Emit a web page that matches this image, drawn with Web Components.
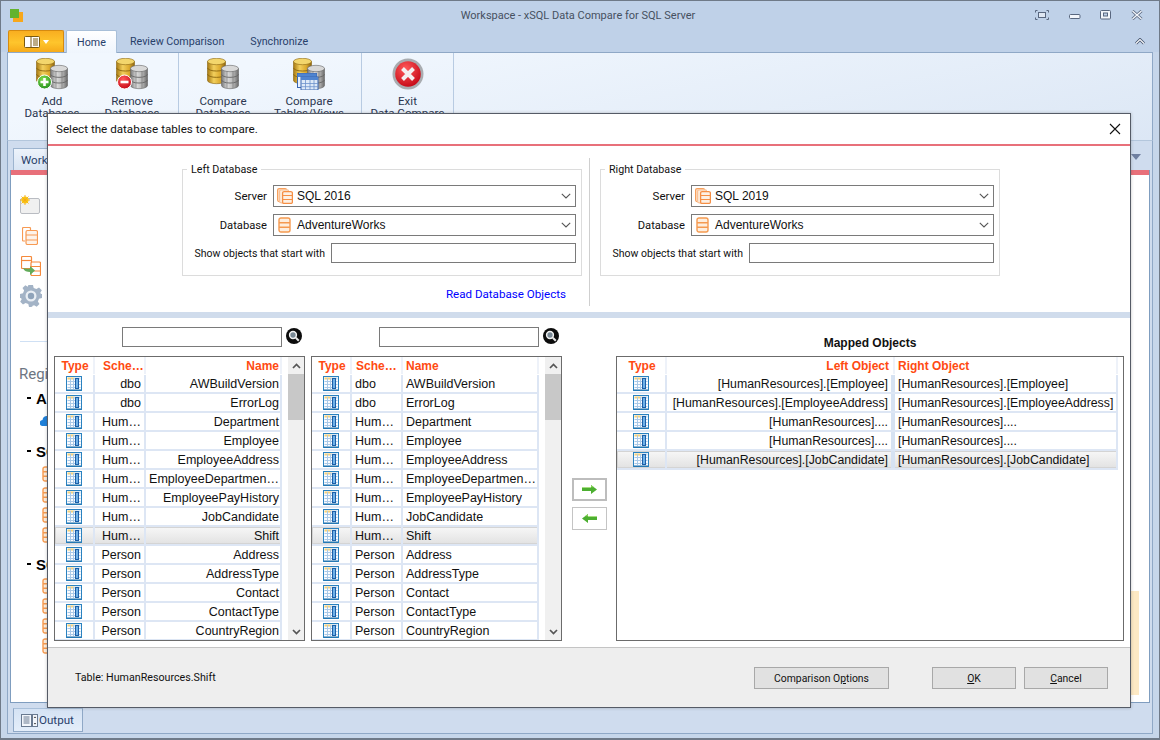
<!DOCTYPE html>
<html lang="en"><head><meta charset="utf-8"><title>xSQL Data Compare</title>
<style>
html,body{margin:0;padding:0;background:#cedcee;overflow:hidden}
body{font:11px Roboto,"Liberation Sans",sans-serif;color:#111}
</style></head><body>
<app-window></app-window>
<script>
function def(name, css, html, init){
  customElements.define(name, class extends HTMLElement{
    connectedCallback(){
      if(this.shadowRoot) return;
      const r=this.attachShadow({mode:'open'});
      const h=typeof html==='function'?html(this):html;
      r.innerHTML='<style>'+css+'</style>'+h;
      if(init) init(this,r);
    }
  });
}
const GR=`<defs>
<linearGradient id="gold" x1="0" x2="1" y1="0" y2="0"><stop offset="0" stop-color="#a87a12"/><stop offset=".35" stop-color="#f2cf5c"/><stop offset=".7" stop-color="#dcaa2e"/><stop offset="1" stop-color="#8c6410"/></linearGradient>
<linearGradient id="gray" x1="0" x2="1" y1="0" y2="0"><stop offset="0" stop-color="#777"/><stop offset=".35" stop-color="#dcdcdc"/><stop offset=".7" stop-color="#b5b5b5"/><stop offset="1" stop-color="#6a6a6a"/></linearGradient>
<radialGradient id="grn" cx=".4" cy=".3" r=".8"><stop offset="0" stop-color="#7fdc4a"/><stop offset="1" stop-color="#1d8a1d"/></radialGradient>
<radialGradient id="red" cx=".4" cy=".3" r=".8"><stop offset="0" stop-color="#ff5a5a"/><stop offset="1" stop-color="#c00010"/></radialGradient>
</defs>`;
function cyl(x,y,w,h,f,line,top){
  const rx=w/2, ry=3.2;
  let s=`<path d="M${x} ${y}v${h}a${rx} ${ry} 0 0 0 ${w} 0v-${h}z" fill="url(#${f})" stroke="${line}" stroke-width=".6"/>`;
  for(let i=1;i<3;i++){const yy=y+h*i/3;s+=`<path d="M${x} ${yy}a${rx} ${ry} 0 0 0 ${w} 0" fill="none" stroke="${line}" stroke-width=".9"/>`;}
  s+=`<ellipse cx="${x+rx}" cy="${y}" rx="${rx}" ry="${ry}" fill="${top}" stroke="${line}" stroke-width=".6"/>`;
  return s;
}
const GOLD=cyl(.5,3.5,18,19,'gold','#8a6510','#f3d66c');
const GRAY=cyl(14.5,10.5,17,17,'gray','#666','#d8d8d8')+`<path d="M20 13v17M26 13v17" stroke="#777" stroke-width=".7"/>`;
function ribbonIcon(kind){
  let extra='';
  if(kind==='add') extra=`<circle cx="8.5" cy="24" r="7" fill="url(#grn)" stroke="#fff" stroke-width="1"/><path d="M8.5 20v8M4.5 24h8" stroke="#fff" stroke-width="2.6"/>`;
  if(kind==='remove') extra=`<circle cx="8.5" cy="24" r="7" fill="url(#red)" stroke="#fff" stroke-width="1"/><path d="M4.5 24h8" stroke="#fff" stroke-width="2.6"/>`;
  if(kind==='tables') extra=`<rect x="4.5" y="15.5" width="19" height="14" fill="#eaf2fc" stroke="#3a66b0"/><rect x="4.5" y="15.5" width="19" height="3.5" fill="#4f84d0"/><rect x="8" y="19" width="17" height="13" fill="#dde9f8" stroke="#3a66b0"/><rect x="8" y="19" width="17" height="3" fill="#4f84d0"/><path d="M8 25.5h17M8 28.7h17M12.5 22v10M17 22v10M21 22v10" stroke="#6d92cc" stroke-width=".8"/>`;
  if(kind==='exit') return `<svg width="32" height="32" viewBox="0 0 32 32">${GR}<circle cx="16" cy="16" r="15.5" fill="#a9acb0"/><circle cx="16" cy="16" r="12.8" fill="url(#red)"/><path d="M10.5 10.5l11 11M21.5 10.5l-11 11" stroke="#f4f0f0" stroke-width="4"/></svg>`;
  return `<svg width="32" height="32" viewBox="0 0 32 32">${GR}${GOLD}${GRAY}${extra}</svg>`;
}
const SERVER=`<svg width="16" height="16" viewBox="0 0 16 16" fill="none" stroke="#f7a05c" stroke-width="1.2"><rect x=".6" y=".6" width="9" height="13" rx="1.5" fill="#fde3cd"/><rect x="2.6" y="1.8" width="9" height="13" rx="1.5" fill="#fdeede" stroke="#f9c196"/><rect x="5.6" y="3.6" width="9.8" height="11.8" rx="1.5" fill="#fdf0e4" stroke="#f58f45" stroke-width="1.3"/><path d="M5.6 7.500h9.800M5.600 11.500h9.800" stroke="#f58f45"/></svg>`;
const DBI=`<svg width="13" height="16" viewBox="0 0 13 16" fill="none" stroke="#f59a50" stroke-width="1.400" style="display:block"><rect x="1" y="1" width="11" height="14" rx="2" fill="#fdeede"/><path d="M1 5.700h11M1 10.300h11"/></svg>`;
const TBL=`<svg width="16" height="15" viewBox="0 0 16 15" style="display:block"><rect x=".5" y=".5" width="15" height="14" fill="#fafcff" stroke="#2a82c0"/><rect x="1.500" y="1.500" width="7" height="2" fill="#f6d27a"/><rect x="8.500" y="1.500" width="6" height="2" fill="#bcd6ee"/><path d="M1.500 5.500h13M1.500 8.500h13M1.500 11.500h13M4.500 2v11M7.500 2v11" stroke="#a9c9e8" stroke-width="1"/><rect x="9.500" y="2.500" width="3" height="10" fill="#6fb0e6" stroke="#1c5fa8"/><path d="M1 14h14" stroke="#1f6ea8" stroke-width="1"/></svg>`;

def('tbl-icon',':host{display:block;width:16px;height:15px}',TBL);
def('ribbon-btn',`:host{display:flex;flex-direction:column;align-items:center;box-sizing:border-box;padding-top:5px;text-align:center;color:#2b3650;line-height:12px;font-size:11.6px}
 .i{height:32px;margin-bottom:5px}`,h=>`<div class="i">${ribbonIcon(h.getAttribute('icon'))}</div><slot></slot>`);
def('ribbon-group',`:host{display:flex;height:100%;border-right:1px solid #b8cbe2;box-sizing:border-box}`,`<slot></slot>`);
def('title-bar',`:host{display:flex;align-items:center;height:30px;position:relative;padding-left:10px;box-sizing:border-box;color:#46505f}
 .logo{width:13px;height:13px;margin-top:1px;flex:none}
 .t{flex:1;text-align:center;padding-left:98px}
 .w{display:flex;gap:15px;padding-right:17px;align-items:center}
 svg{display:block}`,
 `<svg class="logo" viewBox="0 0 13 13"><rect x="3" y="3" width="10" height="10" fill="#f7a71a"/><rect width="9" height="9" fill="#63b32e"/></svg>
 <div class="t">Workspace - xSQL Data Compare for SQL Server</div>
 <div class="w">
 <svg width="14" height="10" viewBox="0 0 14 10" fill="none" stroke="#59677f"><path d="M.5 2.500v-2h2M11.500.5h2v2M.5 7.500v2h2M11.500 9.500h2v-2"/><rect x="3.500" y="2.500" width="7" height="5" fill="#dfe7f2"/></svg>
 <svg style="margin-left:5px;margin-top:2px" width="12" height="5" viewBox="0 0 12 5" fill="#f3f6fb" stroke="#59677f"><rect x=".5" y=".5" width="10.500" height="4" rx="1"/></svg>
 <svg style="margin-left:4px" width="11" height="10" viewBox="0 0 11 10" fill="#f3f6fb" stroke="#59677f"><rect x=".5" y=".5" width="10" height="8.500" rx="1"/><rect x="3.500" y="3" width="4" height="3" fill="#bfd1e8"/></svg>
 <svg style="margin-left:5px" width="12" height="10" viewBox="0 0 12 10"><path d="M1.500 1l9 8M10.500 1l-9 8" stroke="#59677f" stroke-width="3"/><path d="M1.500 1l9 8M10.500 1l-9 8" stroke="#f3f6fb" stroke-width="1.400"/></svg>
 </div>`);
def('ribbon-tabs',`:host{display:flex;height:22px;padding-left:8px;align-items:stretch;position:relative;color:#28406a;font-size:10.7px}
 .file{width:56px;box-sizing:border-box;border:1px solid #d58a10;border-bottom:none;border-radius:2px 2px 0 0;background:linear-gradient(#f9ae20,#fec52c 55%,#f6aa1a);display:flex;align-items:center;justify-content:center;gap:3px}
 .home{margin-left:2px;width:51px;box-sizing:border-box;border:1px solid #a8bfd8;border-bottom:none;border-radius:2px 2px 0 0;background:linear-gradient(#fff,#eff5fd);display:flex;align-items:center;justify-content:center;position:relative;z-index:1;height:23px}
 .tab{display:flex;align-items:center;margin-left:13px}.tab.s{margin-left:26px}
 .col{position:absolute;right:15px;top:8px}`,
 `<div class="file"><svg width="16" height="12" viewBox="0 0 16 12" fill="#fff" stroke="#7a5a10"><rect x=".5" y=".5" width="15" height="11" rx="1"/><path d="M7 .5v11M9 3h5M9 5h5M9 7h5M9 9h5" fill="none"/></svg><svg width="6" height="4" viewBox="0 0 6 4"><path d="M0 0h6L3 4z" fill="#fff"/></svg></div>
 <div class="home">Home</div><div class="tab">Review Comparison</div><div class="tab s">Synchronize</div>
 <svg class="col" width="10" height="7" viewBox="0 0 10 7" fill="none"><path d="M1 5.500l4-4 4 4" stroke="#46556e" stroke-width="2.800"/><path d="M1 5.500l4-4 4 4" stroke="#fff" stroke-width="1.100"/></svg>`);
def('ribbon-bar',`:host{display:flex;height:89px;margin:0 7px;box-sizing:border-box;border:1px solid #8fa8c6;border-bottom-color:#b3c6dc;background:linear-gradient(168deg,#f1f7fe 20%,#dce7f5 100%);flex:none}`,`<slot></slot>`);
def('doc-tabs',`:host{display:flex;height:29px;padding:7px 8px 0 3px;box-sizing:border-box;justify-content:space-between;color:#28406a;flex:none;font-size:11.6px}
 .tab{width:70px;height:22px;box-sizing:border-box;border:1px solid #9db4cf;border-bottom:none;background:linear-gradient(#edf3fb,#d8e4f3);padding:4px 0 0 7px}
 svg{margin:6px 1px 0 0}`,`<div class="tab">Workspace</div><svg width="10" height="6" viewBox="0 0 10 6"><path d="M0 0h10L5 6z" fill="#6f7fa0"/></svg>`);
def('side-row',`:host{display:flex;align-items:center;height:20px;padding-left:22px}`,`<slot></slot>`);
def('side-head',`:host{display:flex;align-items:center;height:20px;padding-left:7px;gap:5px;font:bold 15px "Liberation Sans",sans-serif;color:#000}
 i{display:block;width:4px;height:1.500px;background:#000}`,`<i></i><slot></slot>`);
def('side-bar',`:host{display:block;flex:1;padding:20px 0 0 9px;min-width:0}
 .ic{display:flex;flex-direction:column;align-items:flex-start}
 .line{height:1px;background:#cfe0f4;width:40px;margin-top:34px}
 .reg{font-size:15px;color:#6d7682;margin-top:21px;height:22px;line-height:22px;margin-left:-1px}
 svg{display:block}`,
 `<div class="ic">
 <svg width="21" height="19" viewBox="0 0 21 19"><rect x=".5" y="3.500" width="19" height="15" rx="1.500" fill="#f0f0f0" stroke="#b9bcc2"/><circle cx="5" cy="5" r="3.500" fill="#fbd116"/><path d="M5 0v10M0 5h10M1.500 1.500l7 7M8.500 1.500l-7 7" stroke="#f5a816" stroke-width=".9"/></svg>
 <svg style="margin:13px 0 0 2px" width="16" height="18" viewBox="0 0 16 18" fill="none" stroke="#f79a53" stroke-width="1.200"><path d="M3 14H1.500a1 1 0 0 1-1-1V1.500a1 1 0 0 1 1-1h6a1 1 0 0 1 1 1V3"/><rect x="4" y="3.500" width="11.500" height="14" rx="1.500" fill="#fdf3ea"/><path d="M4 8h11.500M4 13h11.500"/></svg>
 <svg style="margin:11px 0 0 1px" width="20" height="20" viewBox="0 0 20 20" fill="none" stroke="#f58a3c" stroke-width="1.200"><rect x=".5" y=".5" width="10" height="12" rx="1"/><path d="M.5 4.500h10"/><rect x="10" y="6" width="9.500" height="13.500" rx="1" fill="#fff"/><path d="M10 10.500h9.500M10 15h9.500"/><path d="M2 12c1 3 4 4 7 4v3l5-4.500L9 10v2.500c-3 .5-5 0-7-.5z" fill="#62ab5a" stroke="none"/></svg>
 <svg style="margin:9px 0 0" width="22" height="22" viewBox="0 0 22 22"><path d="M9 0h4l.7 3 2.700 1.100 2.600-1.600 2.800 2.800-1.600 2.600L21.300 9 22 9v4l-3 .7-1.100 2.700 1.600 2.600-2.800 2.800-2.600-1.600-2.700 1.100L13 22H9l-.7-3-2.700-1.100-2.600 1.600-2.800-2.800 1.600-2.600L.7 13H0V9l3-.7 1.100-2.700-1.600-2.600 2.800-2.800 2.600 1.600L8.300 0z" fill="#a3b3c6"/><circle cx="11" cy="11" r="5.500" fill="#e9eef4"/><circle cx="11" cy="11" r="3.200" fill="#8fa3ba"/></svg>
 </div>
 <div class="line"></div>
 <div class="reg">Regi</div>
 <side-head style="margin-top:3px">A</side-head>
 <side-row style="margin-top:2px;padding-left:20px"><svg width="16" height="11" viewBox="0 0 16 11"><path d="M3 11a3 3 0 0 1-.5-6A4.500 4.500 0 0 1 11 3.500a3.800 3.800 0 0 1 1 7.500z" fill="#1e7fd8"/></svg></side-row>
 <side-head style="margin-top:11px">SC</side-head>
 <side-row style="margin-top:3px">${DBI}</side-row><side-row style="margin-top:1px">${DBI}</side-row><side-row>${DBI}</side-row><side-row>${DBI}</side-row>
 <side-head style="margin-top:9px">SC</side-head>
 <side-row style="margin-top:2px">${DBI}</side-row><side-row>${DBI}</side-row><side-row>${DBI}</side-row><side-row>${DBI}</side-row>`);
def('work-panel',`:host{display:flex;flex:1;min-height:0;margin:0 0 5px;background:#fff;border:1px solid #7f9dbf;border-top:none;box-sizing:border-box;flex-direction:column}
 .red{height:5px;background:#e8707a;flex:none}
 .b{flex:1;display:flex;min-height:0}
 .y{width:8px;height:104px;margin:416px 10px 0 0;background:#fde9c4;flex:none}`,
 `<div class="red"></div><div class="b"><side-bar></side-bar><div class="y"></div></div>`);
def('output-bar',`:host{display:flex;height:24px;padding:0 0 0 3px;color:#28406a;margin-bottom:1px;flex:none;font-size:11.6px}
 .tab{display:flex;align-items:center;gap:1px;width:70px;box-sizing:border-box;padding-left:7px;border:1px solid #8fa8c6;border-top-color:#a9c0da;background:linear-gradient(#d5e3f4,#e4eefa)}`,
 `<div class="tab"><svg width="17" height="13" viewBox="0 0 17 13"><rect x=".5" y=".5" width="10" height="12" fill="#f3f6fb" stroke="#6a7a90"/><path d="M2.500 3h6M2.500 5h6M2.500 7h6M2.500 9h6" stroke="#6a7a90"/><rect x="11.500" y=".5" width="5" height="12" fill="#f3f6fb" stroke="#6a7a90"/><path d="M12.800 4l1.200-1.600L15.200 4zM12.800 9l1.200 1.600L15.200 9z" fill="#333"/></svg>Output</div>`);

/* dialog parts */
def('combo-box',`:host{display:flex;align-items:center;width:303px;height:22px;box-sizing:border-box;border:1px solid #7a7a7a;background:#fff;padding-left:2px;font:12px "Liberation Sans",sans-serif;color:#111}
 .ic{width:17px;display:flex;justify-content:center;margin-right:4px;flex:none}
 .t{flex:1}svg{display:block}.c{margin-right:4px}`,
 h=>`<div class="ic">${h.getAttribute('icon')==='server'?SERVER:DBI}</div><div class="t"><slot></slot></div><svg class="c" width="10" height="6" viewBox="0 0 10 6" fill="none"><path d="M.8.8L5 5l4.200-4.200" stroke="#555" stroke-width="1.100"/></svg>`);
def('form-row',`:host{display:flex;justify-content:flex-end;align-items:center;gap:6px;color:#111;white-space:nowrap;font-size:11.2px}`,`<slot></slot>`);
def('text-box',`:host{display:block;box-sizing:border-box;border:1px solid #7a7a7a;background:#fff;height:20px}`,``);
def('group-box',`:host{display:block;width:400px;height:107px;box-sizing:border-box;border:1px solid #dcdcdc;position:relative;padding:15px 5px 0 0}
 .l{position:absolute;left:4px;top:-7px;background:#fff;padding:0 4px;line-height:14px;color:#111;font-size:10.7px}
 .r{display:flex;flex-direction:column;gap:7px}`,
 h=>`<div class="l">${h.getAttribute('label')}</div><div class="r"><slot></slot></div>`);
const rowsFor=[['AWBuildVersion','dbo'],['ErrorLog','dbo'],['Department','Hum…'],['Employee','Hum…'],['EmployeeAddress','Hum…'],['EmployeeDepartmen…','Hum…'],['EmployeePayHistory','Hum…'],['JobCandidate','Hum…'],['Shift','Hum…',1],['Address','Person'],['AddressType','Person'],['Contact','Person'],['ContactType','Person'],['CountryRegion','Person']];
const GRIDCSS=`:host{display:flex;box-sizing:border-box;border:1px solid #6b6b6b;background:#fff;height:285px;font:12.5px "Liberation Sans",sans-serif;color:#111;overflow:hidden}
 .rows{flex:1;min-width:0;display:flex;flex-direction:column}
 .row,.head{display:grid;grid-template-columns:var(--cols);height:19px;box-sizing:border-box;flex:none}
 .head{height:18px;padding-bottom:1px;font:bold 12px "Liberation Sans",sans-serif;color:#ff4a12;align-items:center}
 .row{border-bottom:2px solid #dde6f4}
 .row>div{display:flex;align-items:center;border-right:2px solid #dde6f4;padding:0 1px 0 3px;white-space:nowrap;overflow:hidden;min-width:0}
 .head>div{display:flex;align-items:center;border-right:2px solid #eef2f9;padding:0 1px 0 3px;white-space:nowrap;height:100%;box-sizing:border-box}
 .c{justify-content:center}.e{justify-content:flex-end}.s{justify-content:flex-start}
 .row>.c{padding:0}.head>.c{padding:0 0 0 2px}
 .row.sel{background:linear-gradient(#f7f7f7,#e2e2e2);box-shadow:inset 0 0 0 1px #d4d4d4}
 .sb{width:22px;flex:none;padding-left:6px;box-sizing:border-box;display:flex;flex-direction:column}
 .tr{flex:1;background:#f0f0f0;display:flex;flex-direction:column;align-items:center}
 .ar{height:17px;display:flex;align-items:center;justify-content:center;flex:none}
 .th{width:100%;height:46px;background:#c8c8c8;flex:none}
 .sp{flex:1}`;
const CHEV=d=>`<svg width="9" height="6" viewBox="0 0 9 6" fill="none"><path d="${d?'M1 1l3.500 3.500L8 1':'M1 5l3.500-3.500L8 5'}" stroke="#555" stroke-width="1.700"/></svg>`;
def('object-grid',GRIDCSS+`:host{--cols:40px 51px 136px}`,h=>{
 const right=h.getAttribute('align')==='right', a=right?'e':'s';
 return `<div class="rows"><div class="head"><div class="c">Type</div><div class="s" style="padding-left:${right?8:4}px">Sche…</div><div class="${a}">Name</div></div>`+
 rowsFor.map(r=>`<div class="row${r[2]?' sel':''}"><div class="c"><tbl-icon></tbl-icon></div><div class="${a}" style="${right?'padding-right:3px':''}">${r[1]}</div><div class="${a}">${r[0]}</div></div>`).join('')+
 `</div><div class="sb"><div class="tr"><div class="ar">${CHEV(0)}</div><div class="th"></div><div class="sp"></div><div class="ar">${CHEV(1)}</div></div></div>`;
});
def('mapped-grid',GRIDCSS+`:host{--cols:50px 228px 223px;padding-right:5px;font-size:12.3px}
 .row>div.g{border-right:4px solid #d6e2f2}
 .row{width:501px}`,()=>{
 const d=[['[HumanResources].[Employee]','[HumanResources].[Employee]'],['[HumanResources].[EmployeeAddress]','[HumanResources].[EmployeeAddress]'],['[HumanResources]....','[HumanResources]....'],['[HumanResources]....','[HumanResources]....'],['[HumanResources].[JobCandidate]','[HumanResources].[JobCandidate]',1]];
 return `<div class="rows"><div class="head"><div class="c">Type</div><div class="e" style="padding-right:4px">Left Object</div><div class="s" style="padding-left:3px">Right Object</div></div>`+
 d.map(r=>`<div class="row${r[2]?' sel':''}"><div class="c"><tbl-icon></tbl-icon></div><div class="e g" style="padding-right:3px">${r[0]}</div><div class="s" style="padding-left:3px">${r[1]}</div></div>`).join('')+`</div>`;
});
def('search-row',`:host{display:flex;justify-content:flex-end;align-items:center;gap:4px;padding-right:3px;height:20px}
 text-box{width:160px}svg{display:block;margin-top:-3px}`,
 `<text-box></text-box><svg width="16" height="16" viewBox="0 0 16 16"><circle cx="8" cy="8" r="8" fill="#0c0c0c"/><circle cx="7" cy="7" r="3.400" fill="#7a8a96" stroke="#f2f2f2" stroke-width="1.500"/><path d="M9.800 9.800l3 3" stroke="#e8e8e8" stroke-width="2"/></svg>`);
def('list-column',`:host{display:flex;flex-direction:column;gap:9px;width:251px;flex:none}`,`<search-row></search-row><slot></slot>`);
def('arrow-btn',`:host{display:flex;align-items:center;justify-content:center;width:35px;height:23px;box-sizing:border-box;border:1px solid #c4c4c4;background:#fff}
 :host([focused]){border:2px solid #bdbdbd}`,h=>h.getAttribute('dir')==='r'?
 `<svg width="15" height="9" viewBox="0 0 15 9"><path d="M0 3h9V0l6 4.500L9 9V6H0z" fill="#4caf30"/><path d="M0 3h9V0l3 2.200H0z" fill="#8ad35a"/></svg>`:
 `<svg width="15" height="9" viewBox="0 0 15 9"><path d="M15 3H6V0L0 4.500 6 9V6h9z" fill="#4caf30"/><path d="M15 3H6V0L3 2.200h12z" fill="#8ad35a"/></svg>`);
def('push-btn',`:host{display:flex;align-items:center;justify-content:center;height:22px;box-sizing:border-box;border:1px solid #a8a8a8;background:#e1e1e1;color:#111;flex:none;font-size:10.4px}`,`<slot></slot>`);
def('modal-dialog',`:host{position:absolute;left:47px;top:113px;width:1084px;height:595px;box-sizing:border-box;border:1px solid #555b66;background:#fff;display:flex;flex-direction:column;box-shadow:0 0 3px rgba(60,60,60,.3);z-index:5;overflow:hidden}
 .hd{height:30px;display:flex;align-items:center;padding:0 9px 0 8px;justify-content:space-between;color:#111;flex:none;font-size:11.65px}
 .redl{height:2px;background:#e8707a;flex:none}
 .top{height:166px;display:flex;flex:none;padding:23px 0 0 134px;box-sizing:border-box}
 .lc{width:407px;flex:none;display:flex;flex-direction:column}
 .link{color:#0000ff;text-align:right;padding-right:23px;margin-top:11px;line-height:14px;font-size:11.6px}
 .sep{width:1px;height:148px;margin-top:-11px;background:#cfcfcf;flex:none}
 .rc{margin-left:10px}
 .band{height:6px;background:#d0dcec;flex:none}
 .main{flex:1;display:flex;padding:9px 0 0 6px;box-sizing:border-box;min-height:0;gap:6px}
 .arrows{width:48px;flex:none;padding:151px 0 0 4px;box-sizing:border-box;display:flex;flex-direction:column;gap:6px;margin-right:-6px}
 .map{width:508px;flex:none;display:flex;flex-direction:column;gap:9px}
 .ml{height:20px;padding-top:9px;box-sizing:border-box;text-align:center;font:bold 12px/14px "Liberation Sans",sans-serif;color:#111}
 .ft{height:60px;flex:none;border-top:1px solid #c4c4c4;background:#eee;display:flex;align-items:flex-start;padding:19px 22px 0 27px;box-sizing:border-box;gap:8px}
 .st{flex:1;padding-top:4px;line-height:14px;color:#111;font-size:10.7px}`,
 `<div class="hd"><span>Select the database tables to compare.</span><svg width="12" height="12" viewBox="0 0 12 12"><path d="M1 1l10 10M11 1L1 11" stroke="#111" stroke-width="1.100"/></svg></div>
 <div class="redl"></div>
 <div class="top">
  <div class="lc"><slot name="left"></slot><div class="link">Read Database Objects</div></div>
  <div class="sep"></div>
  <div class="rc"><slot name="right"></slot></div>
 </div>
 <div class="band"></div>
 <div class="main">
  <list-column><object-grid align="right"></object-grid></list-column>
  <list-column><object-grid align="left"></object-grid></list-column>
  <div class="arrows"><arrow-btn dir="r" focused></arrow-btn><arrow-btn dir="l"></arrow-btn></div>
  <div class="map"><div class="ml">Mapped Objects</div><mapped-grid></mapped-grid></div>
 </div>
 <div class="ft"><div class="st">Table: HumanResources.Shift</div>
  <push-btn style="width:135px;margin-right:35px">Comparison O<u>p</u>tions</push-btn>
  <push-btn style="width:84px"><u>O</u>K</push-btn>
  <push-btn style="width:84px"><u>C</u>ancel</push-btn>
 </div>`);
function dbForm(slot,label,server){
 return `<group-box slot="${slot}" label="${label}">
 <form-row><span style="font-size:11.5px">Server</span><combo-box icon="server">${server}</combo-box></form-row>
 <form-row><span>Database</span><combo-box icon="db">AdventureWorks</combo-box></form-row>
 <form-row><span style="font-size:10.5px">Show objects that start with</span><text-box style="width:245px"></text-box></form-row>
 </group-box>`;
}
def('app-window',`:host{display:flex;flex-direction:column;width:1160px;height:740px;box-sizing:border-box;position:relative;background:#c6d6ea;overflow:hidden;color:#28406a}
 :host::after{content:"";position:absolute;inset:0;border:1px solid #6f7a88;border-bottom-width:2px;pointer-events:none;z-index:9}
 .tb{background:#bfd1e8;flex:none}
 .frame{flex:1;min-height:0;display:flex;flex-direction:column;margin:0 7px 6px;padding:0 2px;border:1px solid #8fa8c6;border-top:none;background:#cfdcee}`,
 `<div class="tb"><title-bar></title-bar><ribbon-tabs></ribbon-tabs></div>
 <ribbon-bar>
  <ribbon-group style="width:171px;padding-left:4px">
   <ribbon-btn icon="add" style="width:80px">Add<br>Databases</ribbon-btn>
   <ribbon-btn icon="remove" style="width:80px">Remove<br>Databases</ribbon-btn>
  </ribbon-group>
  <ribbon-group style="width:183px;padding-left:1px">
   <ribbon-btn icon="cmp" style="width:86px">Compare<br>Databases</ribbon-btn>
   <ribbon-btn icon="tables" style="width:86px">Compare<br>Tables/Views</ribbon-btn>
  </ribbon-group>
  <ribbon-group style="width:92px">
   <ribbon-btn icon="exit" style="width:91px">Exit<br>Data Compare</ribbon-btn>
  </ribbon-group>
 </ribbon-bar>
 <div class="frame">
 <doc-tabs></doc-tabs>
 <work-panel></work-panel>
 <output-bar></output-bar>
 </div>
 <modal-dialog>${dbForm('left','Left Database','SQL 2016')}${dbForm('right','Right Database','SQL 2019')}</modal-dialog>`);
</script>
</body></html>
